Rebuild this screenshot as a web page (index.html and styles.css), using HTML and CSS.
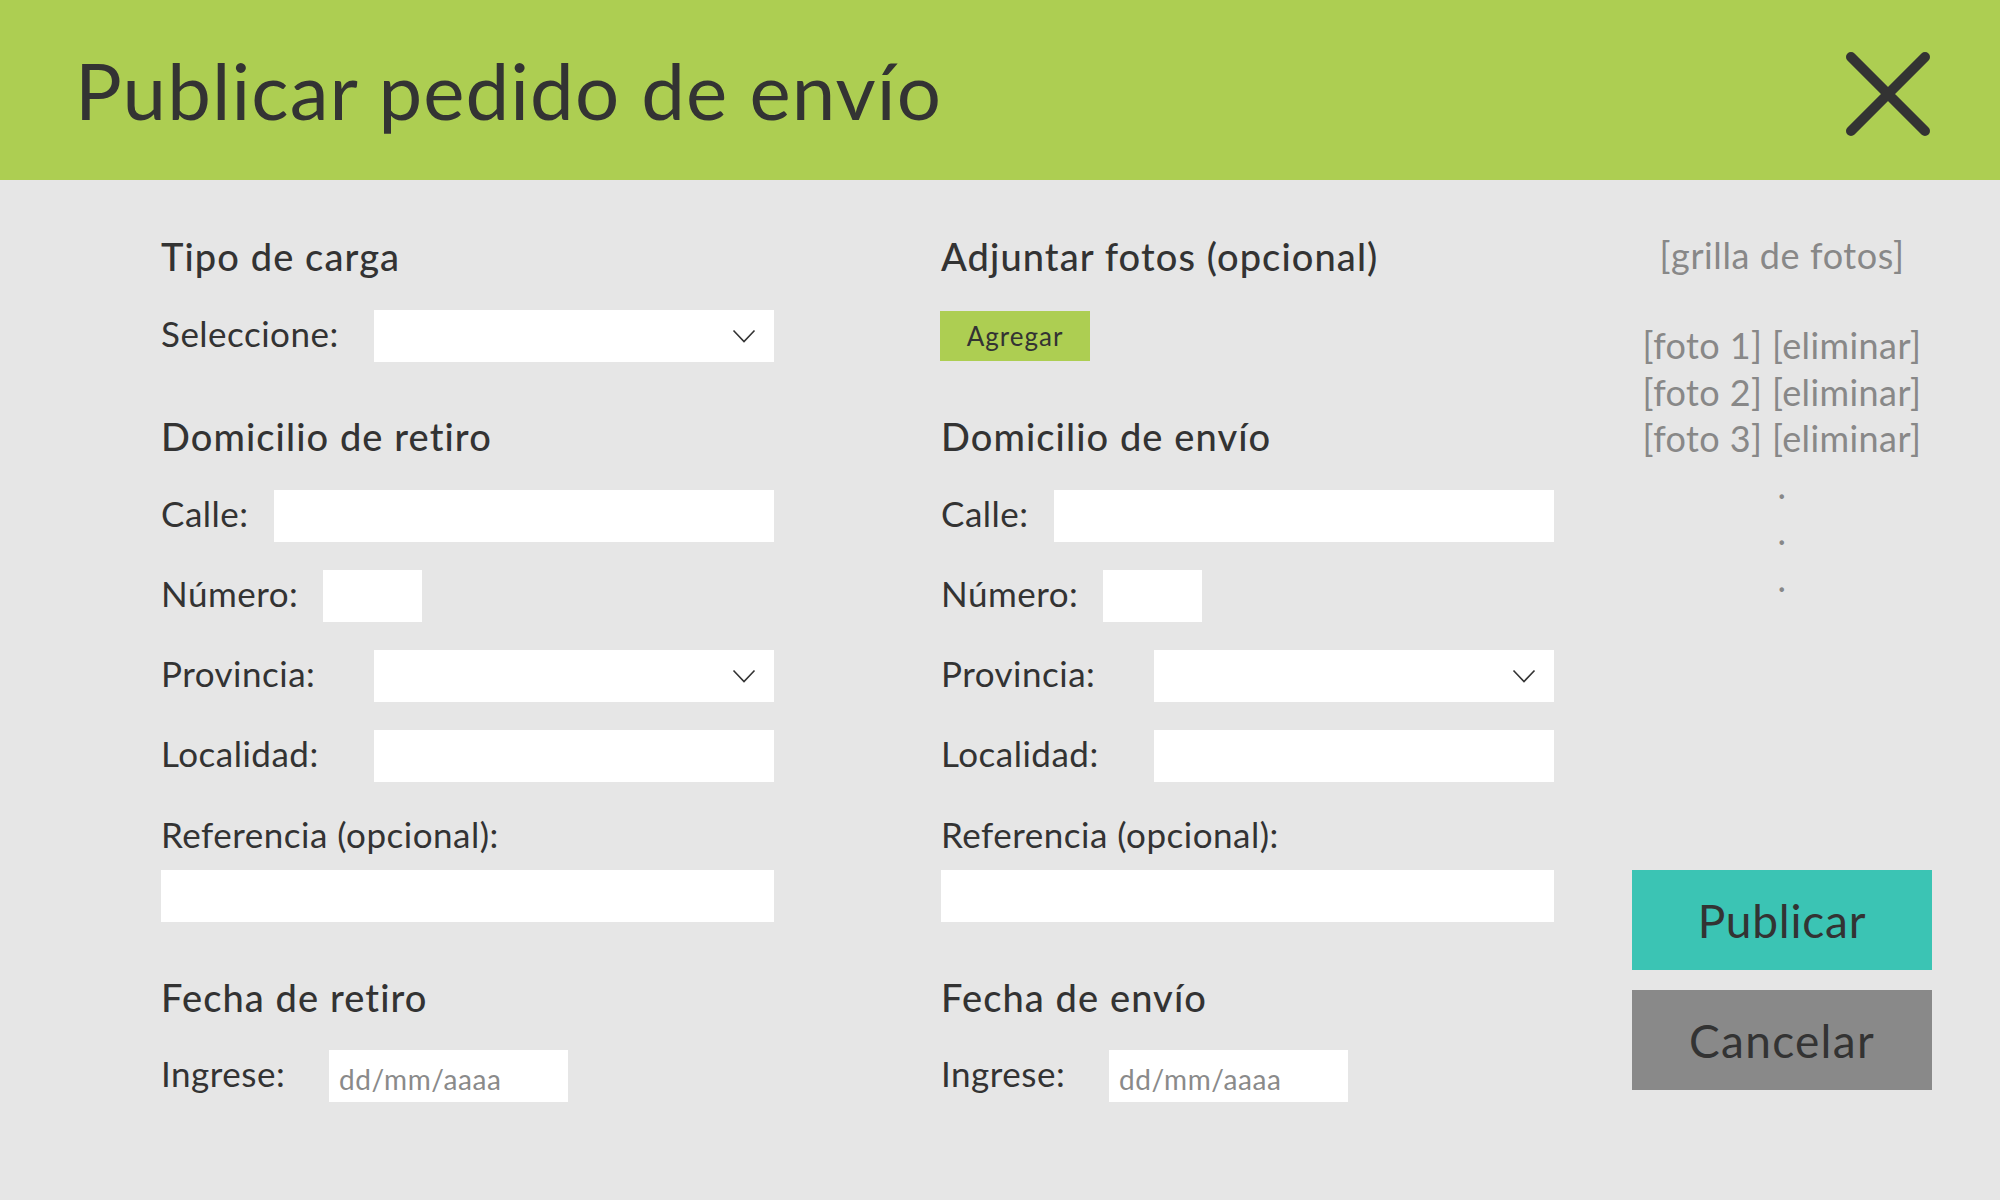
FILE: index.html
```html
<!DOCTYPE html>
<html lang="es">
<head>
<meta charset="utf-8">
<title>Publicar pedido de envío</title>
<link rel="stylesheet" href="styles.css">
</head>
<body>
<header class="topbar">
  <h1 class="title">Publicar pedido de envío</h1>
  <button class="close" aria-label="Cerrar">
    <svg width="86" height="86" viewBox="0 0 86 86"><path d="M6 6 L80 80 M80 6 L6 80" stroke="#333" stroke-width="10" stroke-linecap="round" fill="none"/></svg>
  </button>
</header>
<main class="content">
  <section class="col">
    <h2 class="sec">Tipo de carga</h2>
    <div class="row gap-s">
      <label class="lbl w213">Seleccione:</label>
      <div class="selbox w400"><select></select><svg class="chev" width="24" height="14" viewBox="0 0 24 14"><path d="M1.5 1.5 L12 12.5 L22.5 1.5" stroke="#333" stroke-width="1.6" fill="none"/></svg></div>
    </div>
    <h2 class="sec gap-l">Domicilio de retiro</h2>
    <div class="row gap-s">
      <label class="lbl w113">Calle:</label><input class="field w500" type="text">
    </div>
    <div class="row gap-s">
      <label class="lbl w162">Número:</label><input class="field w99" type="text">
    </div>
    <div class="row gap-s">
      <label class="lbl w213">Provincia:</label>
      <div class="selbox w400"><select></select><svg class="chev" width="24" height="14" viewBox="0 0 24 14"><path d="M1.5 1.5 L12 12.5 L22.5 1.5" stroke="#333" stroke-width="1.6" fill="none"/></svg></div>
    </div>
    <div class="row gap-s">
      <label class="lbl w213">Localidad:</label><input class="field w400" type="text">
    </div>
    <label class="lbl line gap-r">Referencia (opcional):</label>
    <input class="field full gap-t" type="text">
    <h2 class="sec gap-f">Fecha de retiro</h2>
    <div class="row gap-d">
      <label class="lbl w168">Ingrese:</label><input class="field w239 date" type="text" placeholder="dd/mm/aaaa">
    </div>
  </section>
  <section class="col col-right">
    <h2 class="sec">Adjuntar fotos (opcional)</h2>
    <div class="row gap-s">
      <button class="add">Agregar</button>
    </div>
    <h2 class="sec gap-l">Domicilio de envío</h2>
    <div class="row gap-s">
      <label class="lbl w113">Calle:</label><input class="field w500" type="text">
    </div>
    <div class="row gap-s">
      <label class="lbl w162">Número:</label><input class="field w99" type="text">
    </div>
    <div class="row gap-s">
      <label class="lbl w213">Provincia:</label>
      <div class="selbox w400"><select></select><svg class="chev" width="24" height="14" viewBox="0 0 24 14"><path d="M1.5 1.5 L12 12.5 L22.5 1.5" stroke="#333" stroke-width="1.6" fill="none"/></svg></div>
    </div>
    <div class="row gap-s">
      <label class="lbl w213">Localidad:</label><input class="field w400" type="text">
    </div>
    <label class="lbl line gap-r">Referencia (opcional):</label>
    <input class="field full gap-t" type="text">
    <h2 class="sec gap-f">Fecha de envío</h2>
    <div class="row gap-d">
      <label class="lbl w168">Ingrese:</label><input class="field w239 date" type="text" placeholder="dd/mm/aaaa">
    </div>
  </section>
  <aside class="photos">
    <p class="ph-title">[grilla de fotos]</p>
    <ul class="ph-list">
      <li>[foto 1] [eliminar]</li>
      <li>[foto 2] [eliminar]</li>
      <li>[foto 3] [eliminar]</li>
      <li class="dot">.</li>
      <li class="dot">.</li>
      <li class="dot">.</li>
    </ul>
    <div class="actions">
      <button class="btn btn-pub">Publicar</button>
      <button class="btn btn-can">Cancelar</button>
    </div>
  </aside>
</main>
</body>
</html>
```

FILE: styles.css
```css
* { box-sizing: border-box; }
html, body { margin: 0; padding: 0; }
body {
  width: 2000px;
  height: 1200px;
  background: #e6e6e6;
  font-family: "Lato", "Noto Sans", sans-serif;
  color: #333;
  overflow: hidden;
}
.topbar {
  height: 180px;
  background: #adce52;
  display: flex;
  align-items: center;
  justify-content: space-between;
  padding: 0 69px 0 75px;
}
.title {
  margin: 0;
  font-size: 78px;
  font-weight: 400;
  line-height: 1;
  letter-spacing: 1.1px;
  color: #333;
}
.close {
  border: 0;
  background: none;
  padding: 0;
  margin-top: 8px;
  display: flex;
}
.content {
  height: 1020px;
  display: flex;
  padding: 50px 0 0 161px;
}
.col {
  width: 613px;
  display: flex;
  flex-direction: column;
}
.col-right { margin-left: 167px; }
.sec {
  margin: 0;
  height: 52px;
  line-height: 52px;
  font-size: 38px;
  font-weight: 500;
  letter-spacing: 1.1px;
  color: #333;
}
.row {
  display: flex;
  align-items: center;
  height: 52px;
}
.lbl {
  font-size: 35px;
  font-weight: 400;
  line-height: 52px;
  letter-spacing: 0.5px;
  color: #333;
  flex: none;
}
.row .lbl { padding-bottom: 6px; }
.line { display: block; height: 52px; }
.field, .selbox {
  height: 52px;
  border: 0;
  background: #fff;
  margin: 0;
  outline: none;
}
.gap-s { margin-top: 28px; }
.gap-l { margin-top: 48px; }
.gap-r { margin-top: 26px; }
.gap-t { margin-top: 10px; }
.gap-f { margin-top: 49px; }
.gap-d { margin-top: 27px; }
.w113 { width: 113px; }
.w162 { width: 162px; }
.w168 { width: 168px; }
.w213 { width: 213px; }
.field.w500 { width: 500px; }
.field.w400, .selbox.w400 { width: 400px; }
.field.w99 { width: 99px; }
.field.w239 { width: 239px; }
.field.full { width: 613px; display: block; }
.selbox {
  position: relative;
  display: flex;
  align-items: center;
}
.selbox select {
  appearance: none;
  -webkit-appearance: none;
  border: 0;
  background: transparent;
  width: 100%;
  height: 100%;
}
.chev {
  position: absolute;
  right: 18px;
  top: 19px;
}
.date {
  font-family: "Lato", sans-serif;
  font-size: 28px;
  letter-spacing: 0.6px;
  padding: 6px 0 0 10px;
  color: #333;
}
.date::placeholder { color: #8a8a8a; }
.add {
  border: 0;
  background: #adce52;
  height: 50px;
  width: 150px;
  margin-left: -1px;
  font-family: "Lato", sans-serif;
  font-size: 26px;
  letter-spacing: 1px;
  color: #333;
  padding: 0;
}
.photos {
  margin-left: 78px;
  width: 300px;
  display: flex;
  flex-direction: column;
  align-items: center;
  padding-bottom: 110px;
  color: #888;
}
.ph-title {
  margin: 0;
  height: 52px;
  line-height: 50px;
  font-size: 36px;
  letter-spacing: 0.6px;
  white-space: nowrap;
}
.ph-list {
  list-style: none;
  margin: 40px 0 0;
  padding: 0;
  text-align: center;
  font-size: 36px;
  letter-spacing: 0.4px;
  line-height: 46.5px;
  white-space: nowrap;
}
.actions {
  margin-top: auto;
  display: flex;
  flex-direction: column;
  gap: 20px;
}
.btn {
  width: 300px;
  height: 100px;
  border: 0;
  padding: 0;
  font-family: "Lato", sans-serif;
  font-size: 46px;
  letter-spacing: 0.8px;
  color: #333;
}
.btn-pub { background: #3bc4b4; }
.btn-can { background: #898989; letter-spacing: 1.3px; }
```
